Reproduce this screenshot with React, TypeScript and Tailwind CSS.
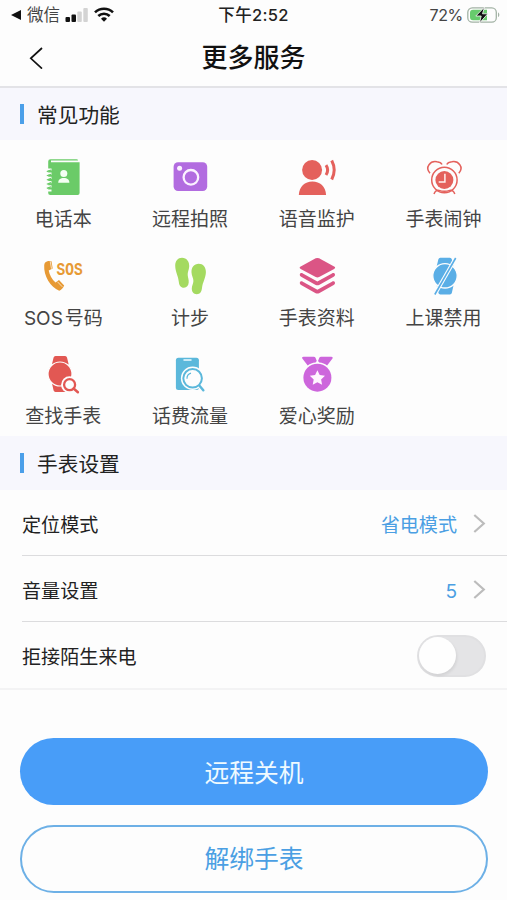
import { useState, type ReactNode } from 'react'
import { clsx } from 'clsx'

interface Service {
  id: string
  label: ReactNode
  icon: ReactNode
}

const services: Service[] = [
  { id: 'contacts', label: '电话本', icon: <ContactsIcon /> },
  { id: 'camera', label: '远程拍照', icon: <CameraIcon /> },
  { id: 'voice', label: '语音监护', icon: <VoiceIcon /> },
  { id: 'alarm', label: '手表闹钟', icon: <AlarmIcon /> },
  { id: 'sos', label: <><span className="mr-[2px]">SOS</span>号码</>, icon: <SosIcon /> },
  { id: 'steps', label: '计步', icon: <StepsIcon /> },
  { id: 'profile', label: '手表资料', icon: <LayersIcon /> },
  { id: 'class', label: '上课禁用', icon: <WatchOffIcon /> },
  { id: 'find', label: '查找手表', icon: <FindWatchIcon /> },
  { id: 'usage', label: '话费流量', icon: <UsageIcon /> },
  { id: 'reward', label: '爱心奖励', icon: <MedalIcon /> },
]

export default function App() {
  const [rejectUnknown, setRejectUnknown] = useState(false)

  return (
    <div
      lang="zh-CN"
      className="flex h-[900px] w-[507px] flex-col overflow-hidden bg-[#fdfdfd] font-['Inter','Noto_Sans_CJK_SC',sans-serif] text-[#222]"
    >
      <StatusBar />

      <header className="grid h-[59px] shrink-0 grid-cols-[72px_1fr_72px] items-center border-b-2 border-[#e3e3e7]">
        <button type="button" aria-label="返回" className="pl-[29px]">
          <svg className="h-[22px] w-[14px]" viewBox="0 0 14 22" fill="none" stroke="#111" strokeWidth={1.7}>
            <path d="M13 1 1.8 11.3 13 21.6" />
          </svg>
        </button>
        <h1 className="text-center text-[26px] leading-[36px] font-medium text-[#111]">更多服务</h1>
      </header>

      <SectionTitle className="h-[52px]">常见功能</SectionTitle>

      <div className="grid h-[296px] shrink-0 grid-cols-4 grid-rows-3">
        {services.map((service) => (
          <button key={service.id} type="button" className="flex flex-col items-center gap-[7px] pt-[15px]">
            {service.icon}
            <span className="text-[19px] leading-[28px] whitespace-nowrap text-[#444]">{service.label}</span>
          </button>
        ))}
      </div>

      <SectionTitle className="h-[54px]">手表设置</SectionTitle>

      <div className="shrink-0 border-b-2 border-[#f3f3f4]">
        <SettingRow label="定位模式" divider>
          <span className="pt-[3px] text-[#4b9fe3]">省电模式</span>
          <Chevron />
        </SettingRow>
        <SettingRow label="音量设置" divider>
          <span className="pt-[3px] text-[#4b9fe3]">5</span>
          <Chevron />
        </SettingRow>
        <SettingRow label="拒接陌生来电">
          <button
            type="button"
            role="switch"
            aria-checked={rejectUnknown}
            aria-label="拒接陌生来电"
            onClick={() => setRejectUnknown(!rejectUnknown)}
            className={clsx(
              'flex h-[42px] w-[69px] items-center rounded-full border-2 p-0',
              rejectUnknown ? 'justify-end border-[#489df8] bg-[#489df8]' : 'border-[#e0e0e2] bg-[#e4e4e6]'
            )}
          >
            <span className="size-[37px] rounded-full bg-[#fefefe] shadow-[1px_2px_3px_rgba(0,0,0,0.08)]" />
          </button>
        </SettingRow>
      </div>

      <div className="flex flex-col gap-5 pt-[48px] pr-[19px] pl-5 text-[24.8px] leading-[36px]">
        <button type="button" className="h-[67px] rounded-full bg-[#489df8] pt-[2px] text-[#effaff]">
          远程关机
        </button>
        <button type="button" className="h-[68px] rounded-full border-2 border-[#6db0e6] text-[#4b9fe3]">
          解绑手表
        </button>
      </div>
    </div>
  )
}

function StatusBar() {
  return (
    <div className="grid h-[29px] shrink-0 grid-cols-3 items-center text-[16.5px] leading-[24px] text-[#222]">
      <div className="flex items-center pl-[11px]">
        <svg className="mr-[6px] h-[10px] w-[10px]" viewBox="0 0 10 10" fill="#111">
          <path d="M0 5 10 0v10z" />
        </svg>
        <span className="text-[#444]">微信</span>
        <svg className="ml-[5px] h-[14px] w-[23px]" viewBox="0 0 23 14">
          <rect x="0.5" y="9" width="4.5" height="5" rx="1" fill="#111" />
          <rect x="6.5" y="6.5" width="4.5" height="7.5" rx="1" fill="#111" />
          <rect x="12.3" y="3.5" width="4.5" height="10.5" rx="1" fill="#d3d3d3" />
          <rect x="18.3" y="0" width="4.5" height="14" rx="1" fill="#d3d3d3" />
        </svg>
        <svg className="ml-[6px] h-[15px] w-[20px]" viewBox="0 0 20 15" fill="none" stroke="#111" strokeWidth={2.6}>
          <path d="M1 5.4a13 13 0 0 1 18 0M4.3 9a8.2 8.2 0 0 1 11.4 0" />
          <path d="M7 11.7a4.4 4.4 0 0 1 6 0L10 14.8z" fill="#111" stroke="none" />
        </svg>
      </div>
      <div className="text-center font-medium tracking-[0.3px]">下午2:52</div>
      <div className="flex items-center justify-end gap-[4px] pr-[7px]">
        <span className="text-[16px] tracking-[-0.3px] text-[#444]">72%</span>
        <svg className="h-[18px] w-[33px]" viewBox="0 0 33 18">
          <rect x="0.8" y="1.8" width="28.5" height="14.4" rx="4.5" fill="none" stroke="#a3b3a5" strokeWidth={1.3} />
          <path d="M6 3.8h14v10.4H6a3 3 0 0 1-3-3V6.8a3 3 0 0 1 3-3z" fill="#67cb6d" />
          <path d="M31 6.5v4.6c1.8-.7 1.800-3.900 0-4.600z" fill="#a3b3a5" />
          <path d="M17.500 1.200 8.800 10h5.400l-1.700 7 8.300-9.200h-5.300z" fill="#111" stroke="#fdfdfd" strokeWidth={0.8} />
        </svg>
      </div>
    </div>
  )
}

function SectionTitle({ className, children }: { className: string; children: ReactNode }) {
  return (
    <div className={clsx('flex shrink-0 items-center gap-[13px] bg-[#f7f7fd] pl-[20px]', className)}>
      <span className="h-5 w-1 bg-[#4b9fe9]" />
      <h2 className="pt-[3px] text-[20.7px] leading-[30px] text-[#222]">{children}</h2>
    </div>
  )
}

interface SettingRowProps {
  label: string
  divider?: boolean
  children: ReactNode
}

function SettingRow({ label, divider, children }: SettingRowProps) {
  return (
    <div
      className={clsx(
        'ml-[22px] flex h-[66px] items-center justify-between pt-px pr-[21px] text-[19.1px] leading-[28px]',
        divider && 'border-b border-[#dcdcde]'
      )}
    >
      <span className="pt-[3px]">{label}</span>
      <div className="flex items-center gap-4">{children}</div>
    </div>
  )
}

function Chevron() {
  return (
    <svg className="h-[19px] w-[13px]" viewBox="0 0 13 19" fill="none" stroke="#bcbcbc" strokeWidth={2.2}>
      <path d="M1.300 1 10.800 9.500 1.300 18" />
    </svg>
  )
}

function IconBox({ color, children }: { color: string; children: ReactNode }) {
  return (
    <svg className="size-11 shrink-0 overflow-visible" viewBox="0 0 44 44" fill={color} stroke="none">
      {children}
    </svg>
  )
}

function ContactsIcon() {
  return (
    <IconBox color="#6bcb68">
      <path d="M9.500 4.300h26q1.500 0 1.500 1.200H10v1.800h28.600V38a2 2 0 0 1-2 2H9.200a2 2 0 0 1-2-2V6.600a2.300 2.300 0 0 1 2.300-2.300z" />
      <path d="M6 14.500h4.500M6 18.700h4.500M6 22.900h4.500M6 27.100h4.500M6 31.300h4.500M6 35.500h4.500" stroke="#fdfdfd" strokeWidth={2.2} />
      <path d="M5.800 16.600 10 15M5.800 20.800 10 19.200M5.800 25 10 23.400M5.800 29.200 10 27.600M5.800 33.400 10 31.800" stroke="#6bcb68" strokeWidth={1.2} />
      <circle cx="22.800" cy="18.600" r="3.500" fill="#f4fff3" />
      <path d="M17.200 27.700c0-3.300 2.200-4.800 5.600-4.800s5.600 1.500 5.600 4.800z" fill="#f4fff3" />
    </IconBox>
  )
}

function CameraIcon() {
  return (
    <IconBox color="#b26ce0">
      <rect x="5.600" y="7.300" width="33.600" height="28.700" rx="4.500" />
      <circle cx="22.900" cy="22.300" r="7.300" fill="none" stroke="#fbf2ff" strokeWidth={2.3} />
      <circle cx="11.600" cy="13.300" r="2.500" fill="#fbf2ff" />
    </IconBox>
  )
}

function VoiceIcon() {
  return (
    <IconBox color="#e4615c">
      <circle cx="17.100" cy="15" r="10" />
      <path d="M3.800 40c.5-8.500 6-13.500 13.600-13.500S30.600 31.500 31.100 40z" />
      <path d="M31 10.200q3.300 4.800 0 9.800M36.700 5.500q5 9.500 0 19" fill="none" stroke="#e4615c" strokeWidth={3} />
    </IconBox>
  )
}

function AlarmIcon() {
  return (
    <IconBox color="#e4615c">
      <circle cx="22.400" cy="25" r="9" />
      <g fill="none" stroke="#e4615c" strokeWidth={1.5}>
        <circle cx="22.400" cy="25" r="12.700" />
        <path d="M8 18.200C2.500 12 8.500 5.500 15 6.800c2.500.4 4.400 1.500 5 2.700M36.800 18.200C42.300 12 36.300 5.500 29.800 6.800c-2.500.4-4.400 1.500-5 2.700" />
        <path d="M12 39c1-3 3-4.300 5-3.600 3.500 1.200 7.300 1.200 10.800 0 2-.7 4 .6 5 3.600" />
      </g>
      <path d="M22.900 18.800v8.200h-6.200" fill="none" stroke="#fff0ee" strokeWidth={1.5} />
    </IconBox>
  )
}

function SosIcon() {
  return (
    <IconBox color="#e79a35">
      <path d="M4.500 8.200c1.500-1.300 4.500-1.600 6-1l1.200 7.300-4 2c.8 4.500 3.300 9 6.800 12l3.500-2.500 5.200 5.500c-1 2.500-3 4.500-5 5.200C9.500 33.500 2.500 21.500 3.200 11.500c.1-1.500.5-2.600 1.300-3.300z" />
      <path d="m9.200 7.200 1.300 7.500M16.500 27.800l4.800 5" stroke="#fdfdfd" strokeWidth={0.7} />
      <text
        x="15.600"
        y="21.300"
        textLength="26"
        lengthAdjust="spacingAndGlyphs"
        className="font-['Liberation_Mono',monospace] text-[18px] leading-none font-bold"
      >
        SOS
      </text>
    </IconBox>
  )
}

function StepsIcon() {
  return (
    <IconBox color="#a4da60">
      <path d="M14 3.800c4.800 0 7.600 4.200 7.200 9-.3 3.500-1.700 5.200-1.500 8.200.2 3.200 1.300 4.600 1 7.600-.3 3.300-2 5.200-4.700 5.200-3.500 0-4.800-2.500-5.200-6C10.300 22 7.200 17.500 7.200 11.800c0-4.800 2.700-8 6.800-8z" />
      <path d="M30.700 9.800c4.400 0 7.200 3.400 7.200 8.200 0 5.700-3.300 10.200-3.900 16-.4 3.500-1.800 6.200-5.200 6.200s-5-2.500-5-5.700c0-3 1.500-4.300 1.600-7.500.1-3-1.700-5-1.900-8.500-.3-4.800 2.500-8.700 7.200-8.700z" />
    </IconBox>
  )
}

function LayersIcon() {
  return (
    <IconBox color="#db5585">
      <path d="M20.700 4.300a4 4 0 0 1 3.400 0l15 8.200c1.400.8 1.400 1.600 0 2.400l-15 8.200a4 4 0 0 1-3.400 0l-15-8.200c-1.400-.8-1.400-1.600 0-2.400z" />
      <path d="M4.800 20.700c0-1.500 1.500-2.100 3-1.300l14.600 8.100 14.600-8.100c1.500-.8 3-.2 3 1.300 0 .9-.5 1.500-1.300 2l-14.600 8.200a4 4 0 0 1-3.400 0L6.100 22.700c-.8-.5-1.300-1.100-1.300-2z" />
      <path d="M4.800 29c0-1.500 1.500-2.100 3-1.300l14.600 8.100L37 27.700c1.500-.8 3-.2 3 1.300 0 .9-.5 1.500-1.300 2l-14.600 8.200a4 4 0 0 1-3.400 0L6.100 31c-.8-.5-1.300-1.100-1.300-2z" />
    </IconBox>
  )
}

function WatchOffIcon() {
  return (
    <IconBox color="#5aaee6">
      <path d="M18.300 3.800h9.600a2 2 0 0 1 1.900 1.500l1.700 7H14.700l1.700-7a2 2 0 0 1 1.900-1.500zM14.700 31.500h16.800l-1.700 7.500a2 2 0 0 1-1.900 1.500h-9.600a2 2 0 0 1-1.900-1.500z" />
      <circle cx="23" cy="21.800" r="12.200" stroke="#fdfdfd" strokeWidth={1.3} />
      <path d="M33.700 4 12.800 40.500" stroke="#fdfdfd" strokeWidth={3.8} />
      <path d="M33.700 4 12.800 40.500" stroke="#5aaee6" strokeWidth={1.6} />
    </IconBox>
  )
}

function FindWatchIcon() {
  return (
    <IconBox color="#e25853">
      <path d="M14.500 4h9.600a2 2 0 0 1 1.900 1.500l1.700 7H10.900l1.700-7A2 2 0 0 1 14.500 4zM10.900 31h16.800L26 38.500a2 2 0 0 1-1.900 1.500h-9.600a2 2 0 0 1-1.900-1.500z" />
      <circle cx="19" cy="22" r="12" stroke="#fdfdfd" strokeWidth={1.2} />
      <circle cx="28.600" cy="32.700" r="8.500" fill="#fdfdfd" />
      <path d="m32.500 36.500 4.300 3.700" stroke="#fdfdfd" strokeWidth={5} />
      <circle cx="28.600" cy="32.700" r="5.500" fill="#fdfdfd" stroke="#e25853" strokeWidth={2.3} />
      <path d="m32.600 36.500 4.300 3.700" stroke="#e25853" strokeWidth={2.5} strokeLinecap="round" />
    </IconBox>
  )
}

function UsageIcon() {
  return (
    <IconBox color="#5bb8db">
      <rect x="7.900" y="5.700" width="23" height="32.300" rx="2.500" />
      <path d="M16 8h7" stroke="#eefaff" strokeWidth={1.5} strokeLinecap="round" />
      <circle cx="24.600" cy="26.300" r="11.700" fill="#fdfdfd" />
      <circle cx="24.600" cy="26.300" r="9.300" fill="#fdfdfd" stroke="#5bb8db" strokeWidth={2} />
      <path d="M19 26.800a5.600 5.600 0 0 1 4-5.700" fill="none" stroke="#5bb8db" strokeWidth={1.2} />
      <path d="m31.500 33.800 3.800 4.400" stroke="#5bb8db" strokeWidth={2.5} strokeLinecap="round" />
    </IconBox>
  )
}

function MedalIcon() {
  return (
    <IconBox color="#cd66dc">
      <path d="M8.500 4.700h10.300a2 2 0 0 1 1.700 1l1.300 3.300-1.300 1.500c-3 .2-5.500 1.200-7.800 3L7.300 6.400c-.5-.9 0-1.700 1.200-1.700zM36.300 4.700H26a2 2 0 0 0-1.700 1L23 9l1.300 1.500c3 .2 5.500 1.200 7.800 3l5.400-7.100c.5-.9 0-1.700-1.200-1.700z" />
      <circle cx="22.400" cy="25.700" r="14" />
      <path d="m22.400 18.200 2.300 4.900 5.300.7-3.900 3.700 1 5.300-4.700-2.600-4.700 2.600 1-5.300-3.900-3.700 5.300-.7z" fill="#fff5ff" />
    </IconBox>
  )
}
